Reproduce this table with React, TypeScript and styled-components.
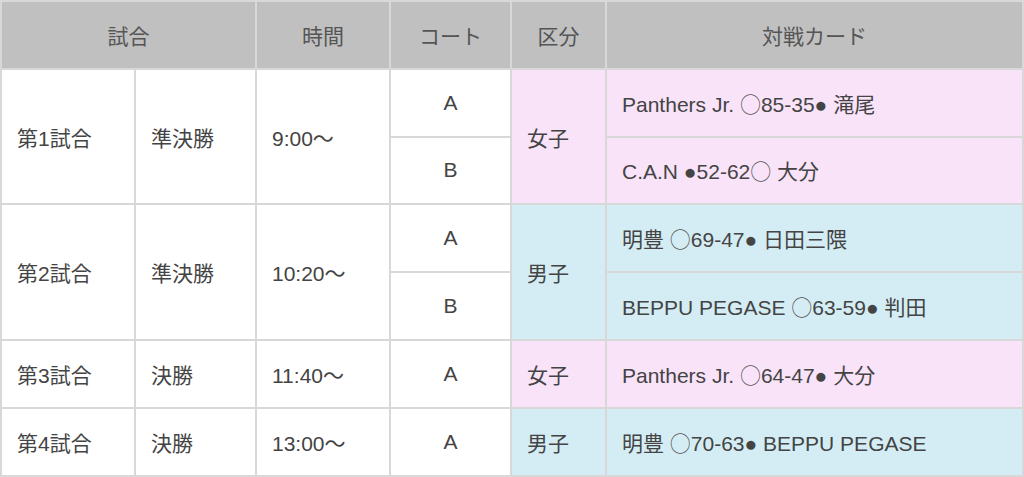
import React from "react";
import styled, { createGlobalStyle } from "styled-components";

const Global = createGlobalStyle`
  html, body { margin: 0; padding: 0; background: #ffffff; }
  body { font-family: "Liberation Sans", "Noto Sans CJK JP", sans-serif; }
`;

const PINK = "#f9e3f9";
const BLUE = "#d4edf4";
const LINE = "#d8d8d8";

const Table = styled.table`
  width: 1024px;
  border-collapse: collapse;
  table-layout: fixed;
  font-size: 21px;
  color: #444444;
`;

const Row = styled.tr`
  height: 67.8px;
`;

const HeadCell = styled.th`
  background: #c0c0c0;
  color: #555555;
  font-weight: normal;
  text-align: center;
  border: 2px solid ${LINE};
  padding: 0;
`;

const Cell = styled.td<{ $bg?: string; $center?: boolean }>`
  background: ${(p) => p.$bg ?? "#ffffff"};
  text-align: ${(p) => (p.$center ? "center" : "left")};
  padding: 0 0 0 ${(p) => (p.$center ? "0" : "15px")};
  border: 2px solid ${LINE};
  vertical-align: middle;
  white-space: nowrap;
`;

const Open = styled.span`
  font-family: "Noto Sans CJK JP", sans-serif;
  font-weight: 300;
  color: #555;
`;

const Dot = styled.span`
  font-family: "Liberation Sans", sans-serif;
`;

const W = () => <Open>○</Open>;
const L = () => <Dot>●</Dot>;

export default function App() {
  return (
    <>
      <Global />
      <Table>
        <colgroup>
          <col style={{ width: 134 }} />
          <col style={{ width: 121 }} />
          <col style={{ width: 134 }} />
          <col style={{ width: 121 }} />
          <col style={{ width: 95 }} />
          <col />
        </colgroup>
        <thead>
          <Row>
            <HeadCell colSpan={2}>試合</HeadCell>
            <HeadCell>時間</HeadCell>
            <HeadCell>コート</HeadCell>
            <HeadCell>区分</HeadCell>
            <HeadCell>対戦カード</HeadCell>
          </Row>
        </thead>
        <tbody>
          <Row>
            <Cell rowSpan={2}>第1試合</Cell>
            <Cell rowSpan={2}>準決勝</Cell>
            <Cell rowSpan={2}>9:00〜</Cell>
            <Cell $center>A</Cell>
            <Cell rowSpan={2} $bg={PINK}>女子</Cell>
            <Cell $bg={PINK}>
              Panthers Jr. <W />85-35<L /> 滝尾
            </Cell>
          </Row>
          <Row>
            <Cell $center>B</Cell>
            <Cell $bg={PINK}>
              C.A.N <L />52-62<W /> 大分
            </Cell>
          </Row>
          <Row>
            <Cell rowSpan={2}>第2試合</Cell>
            <Cell rowSpan={2}>準決勝</Cell>
            <Cell rowSpan={2}>10:20〜</Cell>
            <Cell $center>A</Cell>
            <Cell rowSpan={2} $bg={BLUE}>男子</Cell>
            <Cell $bg={BLUE}>
              明豊 <W />69-47<L /> 日田三隈
            </Cell>
          </Row>
          <Row>
            <Cell $center>B</Cell>
            <Cell $bg={BLUE}>
              BEPPU PEGASE <W />63-59<L /> 判田
            </Cell>
          </Row>
          <Row>
            <Cell>第3試合</Cell>
            <Cell>決勝</Cell>
            <Cell>11:40〜</Cell>
            <Cell $center>A</Cell>
            <Cell $bg={PINK}>女子</Cell>
            <Cell $bg={PINK}>
              Panthers Jr. <W />64-47<L /> 大分
            </Cell>
          </Row>
          <Row>
            <Cell>第4試合</Cell>
            <Cell>決勝</Cell>
            <Cell>13:00〜</Cell>
            <Cell $center>A</Cell>
            <Cell $bg={BLUE}>男子</Cell>
            <Cell $bg={BLUE}>
              明豊 <W />70-63<L /> BEPPU PEGASE
            </Cell>
          </Row>
        </tbody>
      </Table>
    </>
  );
}
